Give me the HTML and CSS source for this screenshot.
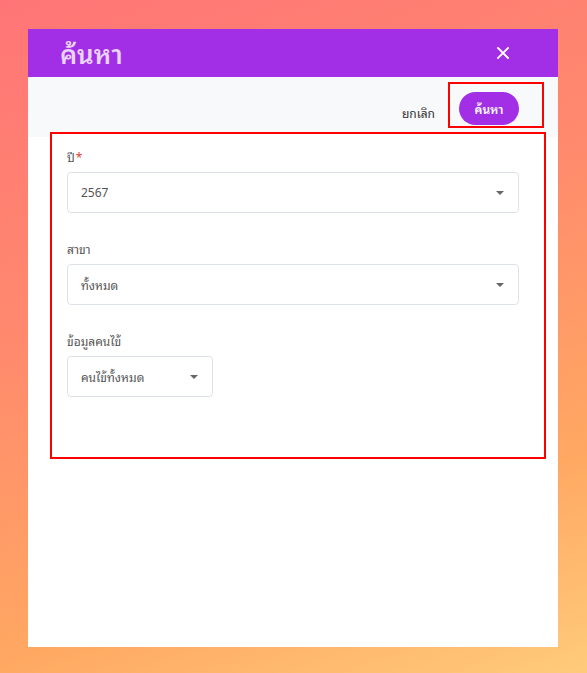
FILE: index.html
```html
<!DOCTYPE html>
<html lang="th">
<head>
<meta charset="utf-8">
<link rel="stylesheet" href="styles.css">
</head>
<body>
<div class="modal">
  <div class="modal-header">
    <h1 class="modal-title">ค้นหา</h1>
    <button class="close-btn" aria-label="close">
      <svg width="14" height="14" viewBox="0 0 14 14"><path d="M2 2L12 12M12 2L2 12" stroke="#fff" stroke-width="1.8" stroke-linecap="square"/></svg>
    </button>
  </div>
  <div class="toolbar">
    <span class="cancel">ยกเลิก</span>
    <div class="highlight btn-wrap">
      <button class="search-btn">ค้นหา</button>
    </div>
  </div>
  <div class="highlight form">
    <div class="field">
      <label class="label">ปี<span class="req">*</span></label>
      <div class="select"><span>2567</span><i class="caret"></i></div>
    </div>
    <div class="field">
      <label class="label">สาขา</label>
      <div class="select"><span>ทั้งหมด</span><i class="caret"></i></div>
    </div>
    <div class="field">
      <label class="label">ข้อมูลคนไข้</label>
      <div class="select small"><span>คนไข้ทั้งหมด</span><i class="caret"></i></div>
    </div>
  </div>
</div>
</body>
</html>
```

FILE: styles.css
```css
* { box-sizing: border-box; }
html, body { margin: 0; height: 100%; }
body {
  padding: 29px 29px 26px 28px;
  background: linear-gradient(160deg, #ff7577 0%, #ff8a6d 40%, #ffa862 75%, #ffcb7b 100%);
  font-family: "Noto Sans", "Noto Sans Thai Looped", "Sarabun", "Loma", "Garuda", "Tlwg Typo", "Noto Sans Thai", "Liberation Sans", sans-serif;
}
.modal {
  width: 530px;
  height: 618px;
  background: #fff;
  display: flex;
  flex-direction: column;
}
.modal-header {
  height: 48px;
  background: #a22ee6;
  display: flex;
  align-items: center;
  justify-content: space-between;
  padding: 0 48px 0 32px;
}
.modal-title {
  margin: 0;
  font-size: 26px;
  font-weight: 600;
  color: #ead3f8;
  line-height: 1;
  margin-top: 2px;
}
.close-btn {
  background: none;
  border: 0;
  padding: 0;
  display: flex;
}
.toolbar {
  height: 55px;
  background: #f8f9fb;
  display: flex;
  justify-content: flex-end;
  align-items: flex-start;
  padding: 5px 14px 0 0;
  box-shadow: 0 5px 0 #f8f9fb;
}
.cancel {
  font-size: 12px;
  color: #333;
  margin-top: 21px;
  margin-right: 13px;
}
.highlight { border: 2px solid #ff0000; }
.btn-wrap {
  width: 96px;
  height: 46px;
  padding: 8px 0 0 9px;
}
.search-btn {
  width: 60px;
  height: 33px;
  border: 0;
  border-radius: 17px;
  background: #a22ee6;
  color: #fff;
  font-family: inherit;
  font-size: 12px;
  font-weight: 600;
}
.form {
  position: relative;
  margin-left: 22px;
  width: 496px;
  height: 327px;
  background: #fff;
  padding: 15px 25px 0 15px;
  display: flex;
  flex-direction: column;
  gap: 28px;
}
.label {
  display: block;
  font-size: 12px;
  line-height: 18px;
  color: #555;
  margin-bottom: 5px;
}
.req { color: #e53935; margin-left: 1px; }
.select {
  height: 41px;
  border: 1px solid #dde2e8;
  border-radius: 4px;
  display: flex;
  align-items: center;
  justify-content: space-between;
  padding: 0 14px 0 13px;
  font-size: 12px;
  color: #555;
}
.select.small { width: 146px; }
.caret {
  width: 0; height: 0;
  border-left: 4px solid transparent;
  border-right: 4px solid transparent;
  border-top: 4px solid #666;
}
```
